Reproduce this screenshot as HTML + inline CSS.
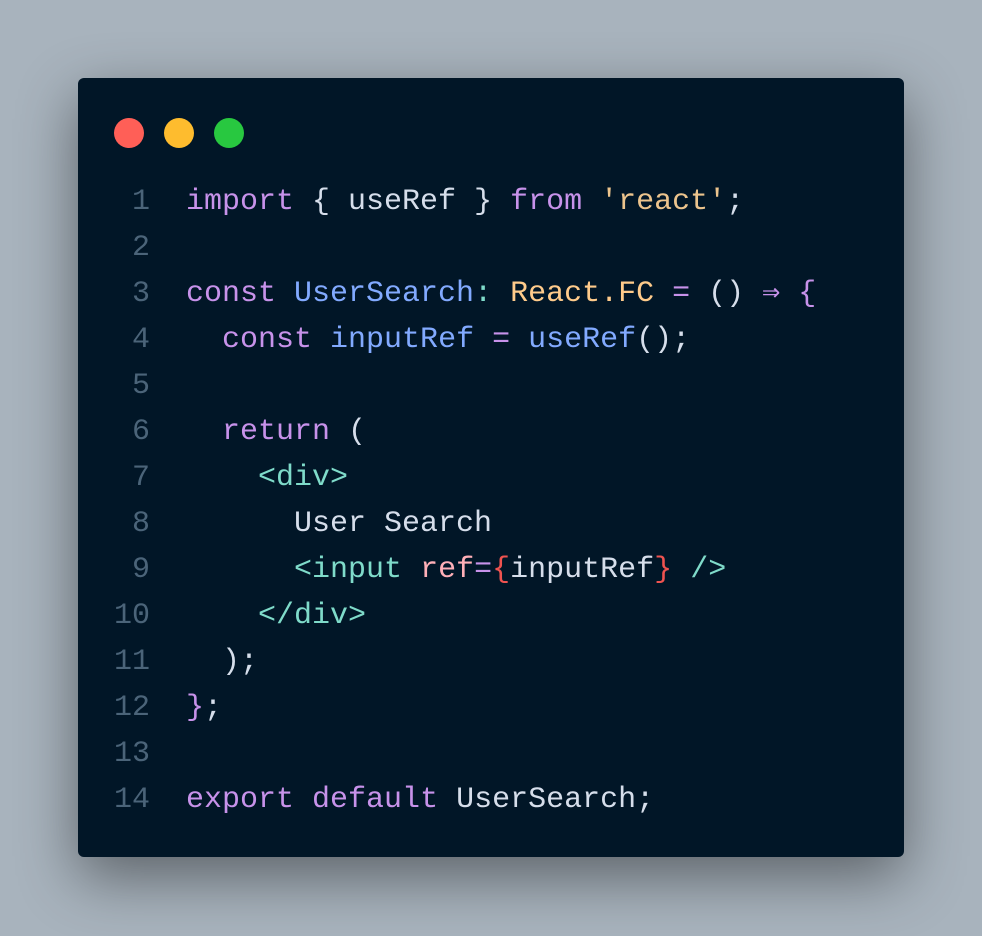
<!DOCTYPE html>
<html><head><meta charset="utf-8"><style>
html,body{margin:0;padding:0;width:982px;height:936px;overflow:hidden;background:#a8b3bd;}
.win{position:absolute;left:78px;top:78px;width:826px;height:779px;background:#011627;border-radius:6px;box-shadow:0 20px 60px rgba(0,0,0,0.45);}
.dot{position:absolute;top:40px;width:30px;height:30px;border-radius:50%;}
pre{position:absolute;left:36px;top:101px;margin:0;font-family:"Liberation Mono",monospace;font-size:30px;line-height:46px;color:#d6deeb;}
.n{color:#4b6479;display:inline-block;width:36px;text-align:right;margin-right:36px;}
.k{color:#c792ea}.f{color:#82aaff}.s{color:#ecc48d}.y{color:#ffcb8b}.t{color:#7fdbca}.a{color:#ffb0b8}.r{color:#ef5350}
</style></head><body>
<div class="win">
<div class="dot" style="left:36px;background:#ff5f57"></div>
<div class="dot" style="left:86px;background:#febc2e"></div>
<div class="dot" style="left:136px;background:#28c840"></div>
<pre><span class="n">1</span><span class="k">import</span> { useRef } <span class="k">from</span> <span class="s">'react'</span>;
<span class="n">2</span>
<span class="n">3</span><span class="k">const</span> <span class="f">UserSearch</span><span class="t">:</span> <span class="y">React.FC</span> <span class="k">=</span> () <span class="k">⇒</span> <span class="k">{</span>
<span class="n">4</span>  <span class="k">const</span> <span class="f">inputRef</span> <span class="k">=</span> <span class="f">useRef</span>();
<span class="n">5</span>
<span class="n">6</span>  <span class="k">return</span> (
<span class="n">7</span>    <span class="t">&lt;div&gt;</span>
<span class="n">8</span>      User Search
<span class="n">9</span>      <span class="t">&lt;input</span> <span class="a">ref</span><span class="k">=</span><span class="r">{</span>inputRef<span class="r">}</span> <span class="t">/&gt;</span>
<span class="n">10</span>    <span class="t">&lt;/div&gt;</span>
<span class="n">11</span>  );
<span class="n">12</span><span class="k">}</span>;
<span class="n">13</span>
<span class="n">14</span><span class="k">export</span> <span class="k">default</span> UserSearch;</pre>
</div>
</body></html>
